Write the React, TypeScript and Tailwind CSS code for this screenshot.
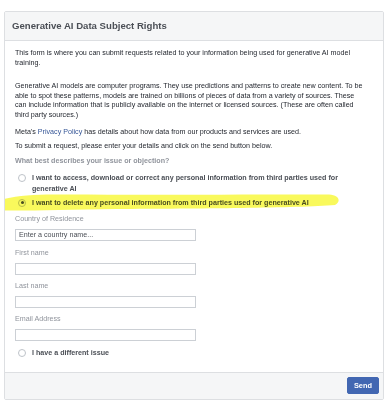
import React, { useState } from 'react';

const font = { fontFamily: '"Liberation Sans", Arial, sans-serif' };

function Radio({ checked }: { checked?: boolean }) {
  return (
    <span className="mt-[1px] flex h-[8px] w-[8px] shrink-0 items-center justify-center rounded-full border border-[#bec3c9] bg-white">
      {checked && <span className="h-[3px] w-[3px] rounded-full bg-[#4b4f56]" />}
    </span>
  );
}

function Field({ label, placeholder, className }: { label: string; placeholder?: string; className?: string }) {
  return (
    <div className={className}>
      <div className="text-[7.15px] leading-[9px] text-[#90949c]">{label}</div>
      <input
        placeholder={placeholder}
        className="mt-[5px] block h-[12px] w-[181px] border border-[#ccd0d5] bg-white px-[3px] text-[7.15px] text-[#1d2129] placeholder:text-[#4b4f56] outline-none"
      />
    </div>
  );
}

export default function App() {
  const [choice, setChoice] = useState('delete');

  return (
    <div className="min-h-[411px] bg-white pt-[11px] pl-[4px] pr-[5px]" style={font}>
      <div className="overflow-hidden rounded-[2px] border border-[#dddfe2] bg-white">
        <div className="flex h-[29px] items-center border-b border-[#dddfe2] bg-[#f5f6f7] pl-[7px]">
          <h1 className="text-[9.6px] font-bold text-[#4b4f56]">Generative AI Data Subject Rights</h1>
        </div>

        <div className="relative px-[10px] pt-[8px] pb-[13px] text-[7.15px] leading-[9.5px] text-[#1d2129]">
          <p>This form is where you can submit requests related to your information being used for generative AI model training.</p>
          <p className="mt-[14px] whitespace-nowrap">
            Generative AI models are computer programs. They use predictions and patterns to create new content. To be
            <br />
            able to spot these patterns, models are trained on billions of pieces of data from a variety of sources. These
            <br />
            can include information that is publicly available on the internet or licensed sources. (These are often called
            <br />
            third party sources.)
          </p>
          <p className="mt-[8px]">
            Meta's <span className="text-[#385898]">Privacy Policy</span> has details about how data from our products and services are used.
          </p>
          <p className="mt-[4px]">To submit a request, please enter your details and click on the send button below.</p>

          <div className="mt-[6px] font-bold text-[#90949c]">What best describes your issue or objection?</div>

          <div className="mt-[6px] flex gap-[6px] pl-[3px] font-bold text-[#4b4f56] leading-[11px]" onClick={() => setChoice('access')}>
            <Radio checked={choice === 'access'} />
            <span className="w-[320px]">I want to access, download or correct any personal information from third parties used for generative AI</span>
          </div>
          <div className="mt-[3px] flex gap-[6px] pl-[3px] font-bold text-[#4b4f56] leading-[11px]" onClick={() => setChoice('delete')}>
            <Radio checked={choice === 'delete'} />
            <span>I want to delete any personal information from third parties used for generative AI</span>
          </div>

          <Field className="mt-[6px]" label="Country of Residence" placeholder="Enter a country name..." />
          <Field className="mt-[8px]" label="First name" />
          <Field className="mt-[7px]" label="Last name" />
          <Field className="mt-[7px]" label="Email Address" />

          <div className="mt-[7px] flex gap-[6px] pl-[3px] font-bold text-[#4b4f56] leading-[11px]" onClick={() => setChoice('other')}>
            <Radio checked={choice === 'other'} />
            <span>I have a different issue</span>
          </div>

          <svg
            className="pointer-events-none absolute left-[-8px] top-[149px] mix-blend-multiply"
            width="350"
            height="26"
            viewBox="0 0 350 26"
          >
            <path
              d="M3 10 C 20 5, 40 4, 70 4.5 C 150 5, 250 4.5, 332 4.5 C 343 5, 344 12, 338 15 C 300 18, 200 18.5, 120 19 C 70 19.5, 30 21, 6 20.5 C 1 19, 1 13, 3 10 Z"
              fill="#f8f84a"
              opacity="0.9"
            />
          </svg>
        </div>

        <div className="flex h-[27px] items-center justify-end border-t border-[#dddfe2] bg-[#f5f6f7] pr-[4px]">
          <button className="h-[17px] rounded-[2px] border border-[#4267b2] bg-[#4267b2] px-[6px] text-[7.4px] font-bold text-white">
            Send
          </button>
        </div>
      </div>
    </div>
  );
}
